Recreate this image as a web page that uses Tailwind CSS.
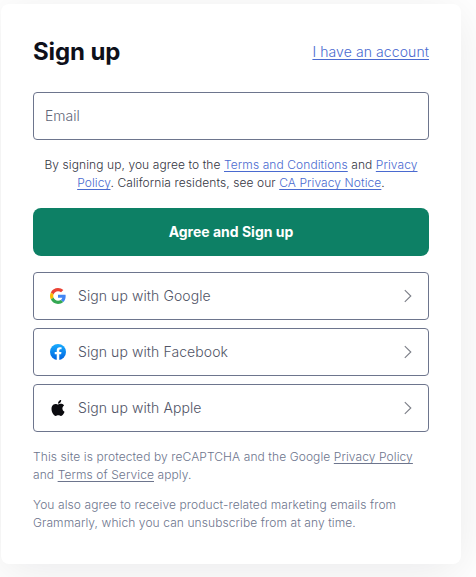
<!DOCTYPE html>
<html lang="en">
<head>
<meta charset="utf-8">
<title>Sign up</title>
<script src="https://cdn.jsdelivr.net/npm/@tailwindcss/browser@4"></script>
</head>
<body class="h-[577px] overflow-hidden bg-white pt-1 pl-px font-['Inter',sans-serif]">
<main class="h-[560px] w-[460px] rounded-lg bg-white px-8 pt-8 shadow-[0_8px_50px_rgba(14,16,26,0.09)]">
  <header class="flex h-8 items-center justify-between">
    <h1 class="text-2xl font-bold tracking-[-0.1px] text-[#0e101a]">Sign up</h1>
    <a class="text-sm leading-5 font-[350] tracking-[0.09px] text-[#4a6ad0] underline decoration-1 underline-offset-2 [text-decoration-skip-ink:none]">I have an account</a>
  </header>
  <div class="mt-6 flex h-12 items-center rounded border border-[#6d758d] px-[11px] text-sm font-[350] text-[#5f6679]">Email</div>
  <p class="mt-4 text-center text-xs leading-[18px] font-[350] tracking-[0.085px] whitespace-nowrap text-[#33353f]">By signing up, you agree to the <a class="text-[#4a6ad0] underline underline-offset-2 [text-decoration-skip-ink:none]">Terms and Conditions</a> and <a class="text-[#4a6ad0] underline underline-offset-2 [text-decoration-skip-ink:none]">Privacy<br>Policy</a>. California residents, see our <a class="text-[#4a6ad0] underline underline-offset-2 [text-decoration-skip-ink:none]">CA Privacy Notice</a>.</p>
  <button class="mt-4 block h-12 w-full rounded-lg bg-[#0d8065] text-sm font-bold text-white">Agree and Sign up</button>
  <div class="mt-4 flex flex-col gap-2 text-sm font-[350] tracking-[0.08px] text-[#505466]">
    <button class="flex h-12 items-center rounded border border-[#6d758d] pr-[15px] pl-4">
      <svg class="size-4" viewBox="0 0 48 48"><path fill="#EA4335" d="M24 9.5c3.54 0 6.71 1.22 9.21 3.6l6.85-6.85C35.9 2.38 30.47 0 24 0 14.62 0 6.51 5.38 2.56 13.22l7.98 6.19C12.43 13.72 17.74 9.5 24 9.5z"/><path fill="#4285F4" d="M46.98 24.55c0-1.57-.15-3.09-.38-4.55H24v9.02h12.94c-.58 2.96-2.26 5.48-4.78 7.18l7.73 6c4.51-4.18 7.09-10.36 7.09-17.65z"/><path fill="#FBBC05" d="M10.53 28.59c-.48-1.45-.76-2.99-.76-4.59s.27-3.14.76-4.59l-7.98-6.19C.92 16.46 0 20.12 0 24c0 3.88.92 7.54 2.56 10.78l7.97-6.19z"/><path fill="#34A853" d="M24 48c6.48 0 11.93-2.13 15.89-5.81l-7.73-6c-2.15 1.45-4.92 2.3-8.16 2.3-6.26 0-11.57-4.22-13.47-9.91l-7.98 6.19C6.51 42.62 14.62 48 24 48z"/></svg>
      <span class="ml-3">Sign up with Google</span>
      <svg class="ml-auto h-[14px] w-[9px]" viewBox="0 0 9 14" fill="none" stroke="#7b7e87" stroke-width="1.1"><path d="M.8 1.2 6.8 7l-6 5.8"/></svg>
    </button>
    <button class="flex h-12 items-center rounded border border-[#6d758d] pr-[15px] pl-4">
      <svg class="size-4" viewBox="0 0 24 24"><defs><linearGradient id="fb" x1="0" y1="0" x2="0" y2="1"><stop stop-color="#18acfe"/><stop offset="1" stop-color="#0163e0"/></linearGradient></defs><circle cx="12" cy="12" r="12" fill="url(#fb)"/><path fill="#fff" d="m16.67 15.47.53-3.47h-3.33V9.75c0-.95.47-1.87 1.96-1.87h1.51V4.92s-1.37-.23-2.69-.23c-2.74 0-4.53 1.66-4.53 4.67V12H7.08v3.47h3.04v8.38a12 12 0 0 0 3.75 0v-8.38z"/></svg>
      <span class="ml-3">Sign up with Facebook</span>
      <svg class="ml-auto h-[14px] w-[9px]" viewBox="0 0 9 14" fill="none" stroke="#7b7e87" stroke-width="1.1"><path d="M.8 1.2 6.8 7l-6 5.8"/></svg>
    </button>
    <button class="flex h-12 items-center rounded border border-[#6d758d] pr-[15px] pl-4">
      <svg class="size-4" viewBox="0 0 24 24" fill="#0b0b0f"><path d="M12.152 6.896c-.948 0-2.415-1.078-3.96-1.04-2.04.027-3.91 1.183-4.961 3.014-2.117 3.675-.546 9.103 1.519 12.09 1.013 1.454 2.208 3.09 3.792 3.039 1.52-.065 2.09-.987 3.935-.987 1.831 0 2.35.987 3.96.948 1.637-.026 2.676-1.48 3.676-2.948 1.156-1.688 1.636-3.325 1.662-3.415-.039-.013-3.182-1.221-3.22-4.857-.026-3.04 2.48-4.494 2.597-4.559-1.429-2.09-3.623-2.324-4.39-2.376-2-.156-3.675 1.09-4.61 1.09zM15.53 3.83c.843-1.012 1.4-2.427 1.245-3.83-1.207.052-2.662.805-3.532 1.818-.78.896-1.454 2.338-1.273 3.714 1.338.104 2.715-.688 3.559-1.701"/></svg>
      <span class="ml-3">Sign up with Apple</span>
      <svg class="ml-auto h-[14px] w-[9px]" viewBox="0 0 9 14" fill="none" stroke="#7b7e87" stroke-width="1.1"><path d="M.8 1.2 6.8 7l-6 5.8"/></svg>
    </button>
  </div>
  <footer class="mt-4 text-xs leading-[18px] font-[350] tracking-[0.09px] text-[#6d758d]">
    <p>This site is protected by reCAPTCHA and the Google <a class="underline underline-offset-2 [text-decoration-skip-ink:none]">Privacy Policy</a><br>and <a class="underline underline-offset-2 [text-decoration-skip-ink:none]">Terms of Service</a> apply.</p>
    <p class="mt-3">You also agree to receive product-related marketing emails from<br>Grammarly, which you can unsubscribe from at any time.</p>
  </footer>
</main>
</body>
</html>
